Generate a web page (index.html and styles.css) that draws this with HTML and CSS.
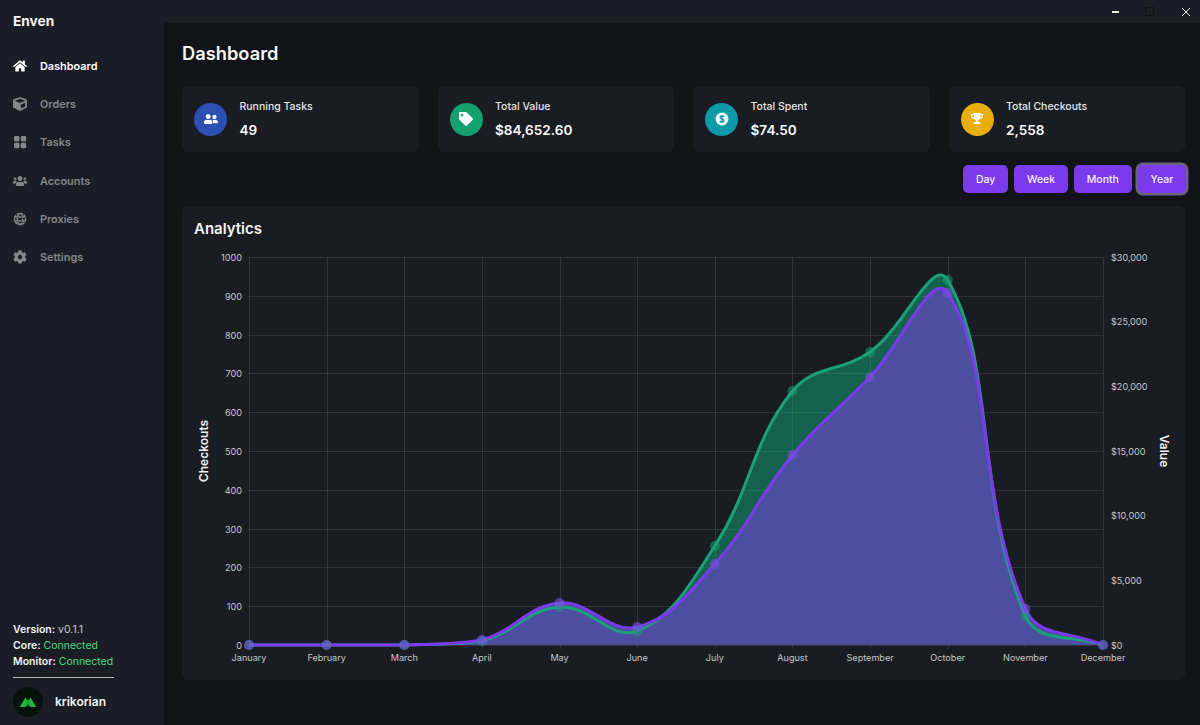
FILE: index.html
```html
<!DOCTYPE html>
<html lang="en">
<head>
<meta charset="utf-8">
<title>Enven</title>
<link rel="stylesheet" href="styles.css">
</head>
<body>
<div class="app">
  <header class="titlebar">
    <span class="win win-min"></span>
    <span class="win win-max"></span>
    <svg class="win-close" viewBox="0 0 10 10"><path d="M1 1l8 8M9 1l-8 8"/></svg>
  </header>
  <aside class="sidebar">
    <div class="brand">Enven</div>
    <nav class="nav">
      <a class="nav-item active"><svg class="nav-icon" viewBox="0 0 576 512"><path d="M280.37 148.26L96 300.11V464a16 16 0 0 0 16 16l112.06-.29a16 16 0 0 0 15.92-16V368a16 16 0 0 1 16-16h64a16 16 0 0 1 16 16v95.64a16 16 0 0 0 16 16.05L464 480a16 16 0 0 0 16-16V300L295.67 148.26a12.19 12.19 0 0 0-15.3 0zM571.6 251.47L488 182.56V44.05a12 12 0 0 0-12-12h-56a12 12 0 0 0-12 12v72.61L318.47 43a48 48 0 0 0-61 0L4.34 251.47a12 12 0 0 0-1.6 16.9l25.5 31A12 12 0 0 0 45.15 301l235.22-193.74a12.19 12.19 0 0 1 15.3 0L530.9 301a12 12 0 0 0 16.9-1.6l25.5-31a12 12 0 0 0-1.7-16.93z"/></svg>Dashboard</a>
      <a class="nav-item"><svg class="nav-icon" viewBox="0 0 512 512"><path d="M239.1 6.3l-208 78c-18.7 7-31.1 25-31.1 45v225.1c0 18.2 10.3 34.8 26.5 42.9l208 104c13.5 6.8 29.4 6.8 42.9 0l208-104c16.3-8.1 26.5-24.8 26.5-42.9V129.3c0-20-12.4-37.9-31.1-44.9l-208-78C262 2.2 250 2.2 239.1 6.3zM256 68.4l192 72v1.1l-192 78-192-78v-1.1l192-72zm32 356V275.5l160-65v133.9l-160 80z"/></svg>Orders</a>
      <a class="nav-item"><svg class="nav-icon" viewBox="0 0 14 14"><rect x="1" y="1" width="5.5" height="5.5" rx="1.4"/><rect x="7.7" y="1" width="5.5" height="5.5" rx="1.4"/><rect x="1" y="7.7" width="5.5" height="5.5" rx="1.4"/><rect x="7.7" y="7.7" width="5.5" height="5.5" rx="1.4"/></svg>Tasks</a>
      <a class="nav-item"><svg class="nav-icon" viewBox="0 0 640 512"><path d="M96 224c35.3 0 64-28.7 64-64s-28.7-64-64-64-64 28.7-64 64 28.7 64 64 64zm448 0c35.3 0 64-28.7 64-64s-28.7-64-64-64-64 28.7-64 64 28.7 64 64 64zm32 32h-64c-17.6 0-33.5 7.1-45.1 18.6 40.3 22.1 68.9 62 75.1 109.4h66c17.7 0 32-14.3 32-32v-32c0-35.3-28.7-64-64-64zm-256 0c61.9 0 112-50.1 112-112S381.9 32 320 32 208 82.1 208 144s50.1 112 112 112zm76.8 32h-8.3c-20.8 10-43.9 16-68.5 16s-47.6-6-68.5-16h-8.3C179.6 288 128 339.6 128 403.2V432c0 26.5 21.5 48 48 48h288c26.5 0 48-21.5 48-48v-28.8c0-63.6-51.6-115.2-115.2-115.2zm-223.7-13.4C161.5 263.1 145.6 256 128 256H64c-35.3 0-64 28.7-64 64v32c0 17.7 14.3 32 32 32h65.9c6.3-47.4 34.9-87.3 75.2-109.4z"/></svg>Accounts</a>
      <a class="nav-item"><svg class="nav-icon globe" viewBox="0 0 14 14"><circle cx="7" cy="7" r="5.6"/><ellipse cx="7" cy="7" rx="2.6" ry="5.6"/><path d="M1.4 5.1h11.2M1.4 8.9h11.2"/></svg>Proxies</a>
      <a class="nav-item"><svg class="nav-icon" viewBox="0 0 512 512"><path d="M487.4 315.7l-42.6-24.6c4.3-23.2 4.3-47 0-70.2l42.6-24.6c4.9-2.8 7.1-8.6 5.5-14-11.1-35.6-30-67.8-54.7-94.6-3.8-4.1-10-5.1-14.8-2.3L380.8 110c-17.9-15.4-38.5-27.3-60.8-35.1V25.8c0-5.6-3.9-10.5-9.4-11.7-36.7-8.2-74.3-7.8-109.2 0-5.5 1.2-9.4 6.1-9.4 11.7V75c-22.2 7.9-42.8 19.8-60.8 35.1L88.7 85.5c-4.9-2.8-11-1.9-14.8 2.3-24.7 26.7-43.6 58.9-54.7 94.6-1.7 5.4.6 11.2 5.5 14L67.3 221c-4.3 23.2-4.3 47 0 70.2l-42.6 24.6c-4.9 2.8-7.1 8.6-5.5 14 11.1 35.6 30 67.8 54.7 94.6 3.8 4.1 10 5.1 14.8 2.3l42.6-24.6c17.9 15.4 38.5 27.3 60.8 35.1v49.2c0 5.6 3.9 10.5 9.4 11.7 36.7 8.2 74.3 7.8 109.2 0 5.5-1.2 9.4-6.1 9.4-11.7v-49.2c22.2-7.9 42.8-19.8 60.8-35.1l42.6 24.6c4.9 2.8 11 1.9 14.8-2.3 24.7-26.7 43.6-58.9 54.7-94.6 1.5-5.5-.7-11.3-5.6-14.1zM256 336c-44.1 0-80-35.9-80-80s35.9-80 80-80 80 35.9 80 80-35.9 80-80 80z"/></svg>Settings</a>
    </nav>
    <div class="status">
      <div><b>Version:</b> <span class="muted">v0.1.1</span></div>
      <div><b>Core:</b> <span class="ok">Connected</span></div>
      <div><b>Monitor:</b> <span class="ok">Connected</span></div>
    </div>
    <div class="user">
      <span class="avatar"><svg viewBox="0 0 30 30"><path class="logo-b" d="M12 15.500l3-3.500 3 3.500-3 4.500z"/><path class="logo-a" d="M6.700 20l5.800-9.500 3.200 5-3.100 4.500zM23.300 20l-5.800-9.500-3.200 5 3.100 4.500z"/></svg></span>
      <span class="username">krikorian</span>
    </div>
  </aside>
  <main class="main">
    <h1 class="page-title">Dashboard</h1>
    <section class="stats">
      <article class="stat">
        <span class="stat-icon blue"><svg viewBox="0 0 640 512"><path d="M192 256c61.9 0 112-50.1 112-112S253.9 32 192 32 80 82.1 80 144s50.1 112 112 112zm76.8 32h-8.3c-20.8 10-43.9 16-68.5 16s-47.6-6-68.5-16h-8.3C51.6 288 0 339.6 0 403.2V432c0 26.5 21.5 48 48 48h288c26.5 0 48-21.5 48-48v-28.8c0-63.6-51.6-115.2-115.2-115.2zM480 256c53 0 96-43 96-96s-43-96-96-96-96 43-96 96 43 96 96 96zm48 32h-3.8c-13.9 4.8-28.6 8-44.2 8s-30.3-3.2-44.2-8H432c-20.4 0-39.2 5.9-55.7 15.4 24.4 26.3 39.7 61.2 39.7 99.8v38.4c0 2.2-.5 4.3-.6 6.4H592c26.5 0 48-21.5 48-48 0-61.9-50.1-112-112-112z"/></svg></span>
        <div class="stat-text"><div class="stat-label">Running Tasks</div><div class="stat-value">49</div></div>
      </article>
      <article class="stat">
        <span class="stat-icon green"><svg viewBox="0 0 512 512"><path d="M0 252.118V48C0 21.49 21.49 0 48 0h204.118a48 48 0 0 1 33.941 14.059l211.882 211.882c18.745 18.745 18.745 49.137 0 67.882L293.823 497.941c-18.745 18.745-49.137 18.745-67.882 0L14.059 286.059A48 48 0 0 1 0 252.118zM112 64c-26.51 0-48 21.49-48 48s21.49 48 48 48 48-21.49 48-48-21.49-48-48-48z"/></svg></span>
        <div class="stat-text"><div class="stat-label">Total Value</div><div class="stat-value">$84,652.60</div></div>
      </article>
      <article class="stat">
        <span class="stat-icon teal"><svg viewBox="0 0 14 14"><circle cx="7" cy="7" r="6.4"/><path class="dollar" d="M9 5.100C8.700 4.300 7.900 4 7 4c-1.100 0-2 .5-2 1.500S6 6.800 7 7s2 .5 2 1.500S8.100 10 7 10c-.9 0-1.700-.3-2-1.100M7 3v8"/></svg></span>
        <div class="stat-text"><div class="stat-label">Total Spent</div><div class="stat-value">$74.50</div></div>
      </article>
      <article class="stat">
        <span class="stat-icon amber"><svg viewBox="0 0 14 14"><path d="M3.500 1h7v1h2.600v1.500c0 1.900-1.500 3.300-3.500 3.600-.5.700-1.100 1.200-1.700 1.400v1.500h1.300c.7 0 1.200.5 1.200 1.100v.9H3.600v-.9c0-.6.5-1.100 1.200-1.100h1.300V8.500c-.6-.2-1.200-.7-1.700-1.400C2.400 6.800.9 5.400.9 3.500V2h2.600zM2.100 3.100v.4c0 1.100.8 2 1.900 2.400-.3-.7-.5-1.700-.5-2.800zm9.800 0h-1.400c0 1.100-.2 2.100-.5 2.800 1.100-.4 1.900-1.300 1.900-2.400z"/></svg></span>
        <div class="stat-text"><div class="stat-label">Total Checkouts</div><div class="stat-value">2,558</div></div>
      </article>
    </section>
    <div class="ranges">
      <button class="range">Day</button>
      <button class="range">Week</button>
      <button class="range">Month</button>
      <button class="range selected">Year</button>
    </div>
    <section class="panel">
      <h2 class="panel-title">Analytics</h2>
      <svg id="chart" class="chart" viewBox="182 245 1003 435"></svg>
    </section>
  </main>
</div>
<script src="chart.js"></script>
</body>
</html>
```
FILE: styles.css
```css
* { box-sizing: border-box; }
html, body { margin: 0; height: 100%; }
body {
  background: #111317;
  color: #fff;
  font-family: Inter, "Liberation Sans", sans-serif;
  overflow: hidden;
}
.app {
  display: grid;
  grid-template-columns: 164px 1fr;
  grid-template-rows: 23px 1fr;
  width: 1200px;
  height: 725px;
}
.titlebar {
  grid-column: 1 / 3;
  grid-row: 1;
  display: flex;
  align-items: center;
  justify-content: flex-end;
  padding-right: 9px;
  background: #1a1d25;
}
.win { display: block; }
.win-min { width: 7px; height: 2px; background: #e8e8e8; margin-right: 26px; }
.win-max { width: 9px; height: 9px; border: 1px solid #0e1014; margin-right: 27px; }
.win-close { width: 10px; height: 10px; }
.win-close path { stroke: #eee; stroke-width: 1; fill: none; }

.sidebar {
  grid-column: 1;
  grid-row: 1 / 3;
  display: flex;
  flex-direction: column;
  background: #1a1d25;
  padding: 12px 0 0 13px;
}
.brand { font-size: 13.700px; font-weight: 700; line-height: 18px; color: #f4f4f5; }
.nav { display: flex; flex-direction: column; margin-top: 17px; }
.nav-item {
  display: flex;
  align-items: center;
  height: 38.200px;
  font-size: 10.900px;
  font-weight: 600;
  color: #85878c;
}
.nav-item.active { color: #fff; }
.nav-icon { width: 14px; height: 14px; margin-right: 13px; fill: currentColor; flex: none; }
.nav-icon.globe { fill: none; stroke: currentColor; stroke-width: 1.500; stroke-dasharray: 3 .7; }
.status {
  margin-top: auto;
  width: 101px;
  padding-bottom: 7px;
  border-bottom: 1px solid #b5b6b9;
  font-size: 10.500px;
  line-height: 16px;
  white-space: nowrap;
}
.status b { font-weight: 600; color: #f4f4f5; }
.muted { color: #c4c5c8; }
.ok { color: #4ade80; }
.user { display: flex; align-items: center; gap: 12px; height: 47px; }
.avatar { width: 30px; height: 30px; border-radius: 50%; background: #06120b; flex: none; }
.avatar svg { display: block; }
.logo-a { fill: #22b537; }
.logo-b { fill: #126a20; }
.username { font-size: 12px; font-weight: 600; color: #f4f4f5; }

.main {
  grid-column: 2;
  grid-row: 2;
  min-width: 0;
  padding: 17px 15px 0 18px;
}
.page-title { margin: 0; font-size: 18.300px; font-weight: 600; line-height: 26px; color: #f6f6f7; }
.stats {
  display: grid;
  grid-template-columns: repeat(4, 1fr);
  gap: 19px;
  margin-top: 20px;
}
.stat {
  display: flex;
  align-items: center;
  gap: 12.500px;
  height: 66px;
  padding: 0 12px;
  background: #191c23;
  border-radius: 6px;
}
.stat-icon {
  display: flex;
  align-items: center;
  justify-content: center;
  width: 33px;
  height: 33px;
  border-radius: 50%;
  flex: none;
}
.stat-icon svg { width: 14px; height: 14px; fill: #fff; }
.blue { background: #2b4fb3; }
.green { background: #14a06f; }
.teal { background: #0e99a6; }
.amber { background: #e9ad0c; }
.dollar { fill: none; stroke: #0e99a6; stroke-width: 1.300; }
.stat-label { font-size: 10.500px; font-weight: 500; line-height: 14px; color: #e4e5e7; }
.stat-value { margin-top: 7px; font-size: 13.600px; font-weight: 600; line-height: 18px; color: #f8f8f9; }
.ranges { display: flex; justify-content: flex-end; gap: 6px; margin: 13px -1px 0 0; }
.range {
  height: 28px;
  padding: 0 12.800px;
  border: 0;
  border-radius: 5px;
  background: #7c3aed;
  color: #f5f0ff;
  font: 500 10.500px Inter, "Liberation Sans", sans-serif;
}
.range.selected { box-shadow: 0 0 0 2.500px #6b6385; }
.panel {
  margin-top: 13px;
  height: 474px;
  background: #191c23;
  border-radius: 6px;
}
.panel-title {
  margin: 0;
  padding: 13px 12px 0;
  height: 39px;
  font-size: 15px;
  font-weight: 600;
  line-height: 20px;
  color: #f4f4f5;
}
.chart { display: block; width: 100%; height: 435px; }
.grid-line { stroke: rgba(255, 255, 255, .1); stroke-width: 1; }
.tick { font-size: 9.100px; fill: #c6c7ca; font-family: Inter, "Liberation Sans", sans-serif; }
.axis-title { font-size: 12px; font-weight: 600; fill: #f0f0f2; font-family: Inter, "Liberation Sans", sans-serif; }
.area-green { fill: rgba(16, 185, 129, .45); }
.area-purple { fill: #4f4ea3; fill-opacity: .96; }
.line-green { fill: none; stroke: #1ba17a; stroke-width: 3; }
.line-purple { fill: none; stroke: #7c3aed; stroke-width: 3; }
.dot-green { fill: rgba(22, 163, 120, .5); }
.dot-purple { fill: rgba(124, 80, 225, .6); }
```
FILE: chart.js
```js
(function () {
  var svg = document.getElementById('chart');
  var NS = 'http://www.w3.org/2000/svg';
  var left = 249, right = 1103, top = 257, bottom = 645;
  var months = ['January', 'February', 'March', 'April', 'May', 'June', 'July', 'August', 'September', 'October', 'November', 'December'];
  var green = [645, 645, 645, 641, 607, 631, 546, 391, 352, 280, 616, 645];
  var purple = [645, 645, 645, 640, 603, 627, 564, 455, 377, 293, 609, 645];
  var step = (right - left) / 11;

  function el(name, attrs, text) {
    var n = document.createElementNS(NS, name);
    for (var k in attrs) n.setAttribute(k, attrs[k]);
    if (text !== undefined) n.textContent = text;
    svg.appendChild(n);
    return n;
  }

  var i, y, x;
  for (i = 0; i <= 10; i++) {
    y = Math.round(top + (bottom - top) * i / 10) + 0.5;
    el('line', { x1: left - 1, x2: right, y1: y, y2: y, 'class': 'grid-line' });
    el('text', { x: 242, y: y + 3, 'text-anchor': 'end', 'class': 'tick' }, String(1000 - i * 100));
  }
  for (i = 0; i < 12; i++) {
    x = Math.round(left + step * i) + 0.5;
    el('line', { x1: x, x2: x, y1: top, y2: bottom + 4, 'class': 'grid-line' });
    el('text', { x: left + step * i, y: 661, 'text-anchor': 'middle', 'class': 'tick' }, months[i]);
  }
  for (i = 0; i <= 6; i++) {
    y = top + (bottom - top) * i / 6;
    el('text', { x: 1111, y: y + 3.5, 'class': 'tick' }, '$' + (30000 - i * 5000).toLocaleString('en-US'));
  }
  el('text', { transform: 'translate(208 451) rotate(-90)', 'text-anchor': 'middle', 'class': 'axis-title' }, 'Checkouts');
  el('text', { transform: 'translate(1160 451) rotate(90)', 'text-anchor': 'middle', 'class': 'axis-title' }, 'Value');

  function curve(ys) {
    var t = 0.4, pts = ys.map(function (v, j) { return [left + step * j, v]; });
    var ctrl = pts.map(function (p, j) {
      var a = pts[Math.max(j - 1, 0)], b = pts[Math.min(j + 1, pts.length - 1)];
      var d1 = Math.hypot(p[0] - a[0], p[1] - a[1]), d2 = Math.hypot(b[0] - p[0], b[1] - p[1]);
      var s = d1 + d2 || 1;
      return {
        p: [p[0] - t * d1 / s * (b[0] - a[0]), Math.min(p[1] - t * d1 / s * (b[1] - a[1]), bottom)],
        n: [p[0] + t * d2 / s * (b[0] - a[0]), Math.min(p[1] + t * d2 / s * (b[1] - a[1]), bottom)]
      };
    });
    var d = 'M' + pts[0][0] + ' ' + pts[0][1];
    for (var j = 1; j < pts.length; j++) {
      d += 'C' + ctrl[j - 1].n[0].toFixed(1) + ' ' + ctrl[j - 1].n[1].toFixed(1) + ' ' +
        ctrl[j].p[0].toFixed(1) + ' ' + ctrl[j].p[1].toFixed(1) + ' ' +
        pts[j][0].toFixed(1) + ' ' + pts[j][1];
    }
    return { d: d, pts: pts };
  }

  function area(c, name) {
    el('path', { d: c.d + 'L' + right + ' ' + bottom + 'L' + left + ' ' + bottom + 'Z', 'class': 'area-' + name });
  }
  function line(c, name) {
    el('path', { d: c.d, 'class': 'line-' + name });
  }
  function dots(c, name) {
    c.pts.forEach(function (p) { el('circle', { cx: p[0], cy: p[1], r: 5, 'class': 'dot-' + name }); });
  }
  var g = curve(green), pu = curve(purple);
  area(g, 'green');
  area(pu, 'purple');
  line(g, 'green');
  line(pu, 'purple');
  dots(g, 'green');
  dots(pu, 'purple');
})();
```
